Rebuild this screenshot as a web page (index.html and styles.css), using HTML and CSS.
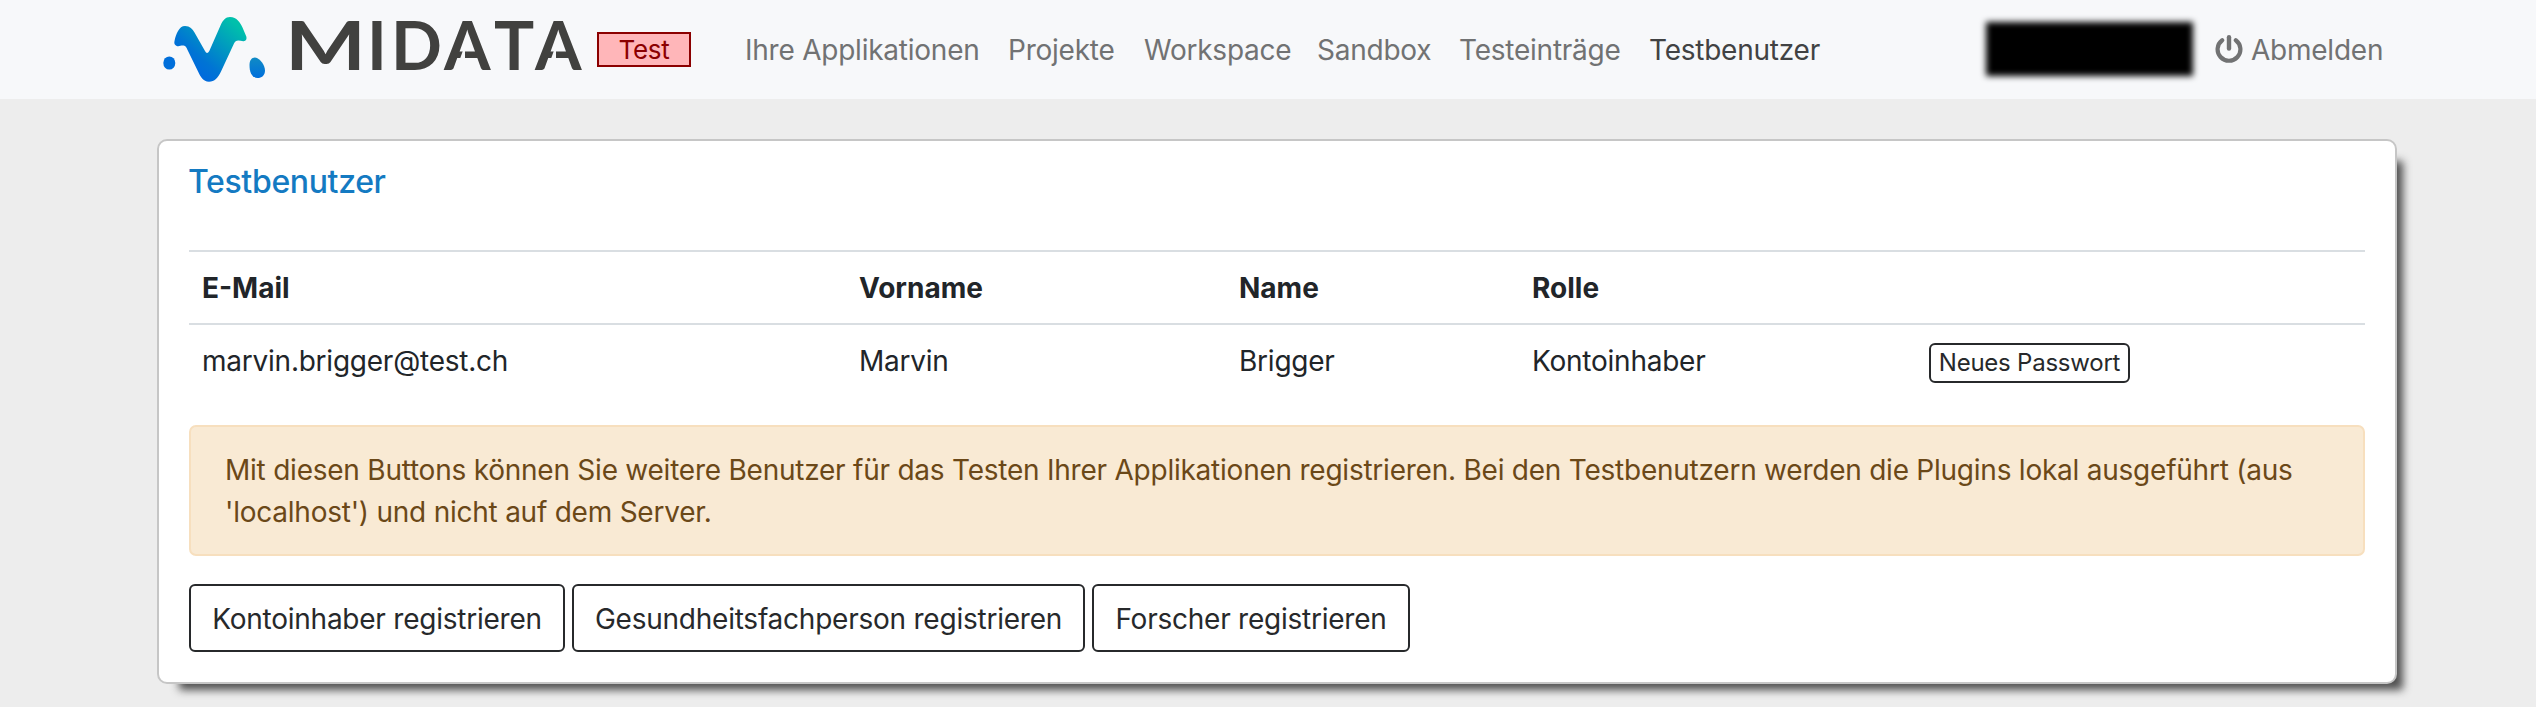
FILE: index.html
```html
<!DOCTYPE html>
<html lang="de">
<head>
<meta charset="utf-8">
<title>MIDATA – Testbenutzer</title>
<link rel="stylesheet" href="styles.css">
</head>
<body>
<header class="navbar">
  <a class="brand">
    <svg class="logo" viewBox="0 0 430 70" width="430" height="70" role="img" aria-label="MIDATA">
      <defs>
        <linearGradient id="wave" gradientUnits="userSpaceOnUse" x1="34" y1="54" x2="74" y2="8">
          <stop offset="0" stop-color="#006bdc"/><stop offset=".2" stop-color="#0074d4"/><stop offset="1" stop-color="#00c0ab"/>
        </linearGradient>
        <linearGradient id="drop" x1="0" y1="1" x2="0" y2="0">
          <stop offset="0" stop-color="#006fdc"/><stop offset="1" stop-color="#108bc4"/>
        </linearGradient>
      </defs>
      <path fill="url(#wave)" d="M13.7 29C11.4 28 11 26 11.5 24C13 17 16 9 22 9C27 9 29.5 12 31.5 15.5L42 34Q44 38 46.3 34L57.5 8.5C60 3 62.5 0 67 0C74 0 77 5.5 79.5 10.5L83.3 19.5C84 22 83 24.4 80.3 24.2Q77.5 23.4 75.3 23.4Q72.3 23.5 71 26.5L58 54.5C55 61 51.5 64.7 46 64.7C40 64.7 37.5 59.5 35.3 55L24.8 33.5C23.2 29.8 22.2 28.6 19.7 28.6C17.5 28.6 15.8 29.8 13.7 29Z"/>
      <ellipse cx="6.3" cy="46" rx="6" ry="6.6" fill="#006fda"/>
      <path fill="url(#drop)" d="M86.5 48C86.5 43 89 40.3 92 40.4C97.5 41.3 102 48.5 102 53.5C102 58.5 98.5 61 94.5 61C88.5 60.5 86.5 55 86.5 48Z"/>
      <g class="wordmark">
        <text transform="translate(122 53) scale(1.28 1)">M</text>
        <text y="53" x="204 228 281 331 372">IDATA</text>
      </g>
      <path class="notch" d="M295.5 46L302 46V32H300.5ZM386.5 46L393 46V32H391.5Z"/>
    </svg>
  </a>
  <span class="stage">Test</span>
  <nav class="nav">
    <a class="n1">Ihre Applikationen</a><a class="n2">Projekte</a><a class="n3">Workspace</a><a class="n4">Sandbox</a><a class="n5">Testeinträge</a><a class="n6 active">Testbenutzer</a>
  </nav>
  <div class="account">
    <span class="user"></span>
    <svg class="power" viewBox="0 0 28 28" width="28" height="28"><path d="M7.2 5.2A11.4 11.4 0 1 0 20.8 5.2" fill="none" stroke="#717273" stroke-width="4.2" stroke-linecap="round"/><path d="M14 2.2V13.6" stroke="#717273" stroke-width="4.4" stroke-linecap="round"/></svg>
    <a>Abmelden</a>
  </div>
</header>
<main class="card">
  <h1>Testbenutzer</h1>
  <table>
    <colgroup><col class="c1"><col class="c2"><col class="c3"><col class="c4"><col></colgroup>
    <thead><tr><th>E-Mail</th><th>Vorname</th><th>Name</th><th>Rolle</th><th></th></tr></thead>
    <tbody><tr><td>marvin.brigger@test.ch</td><td>Marvin</td><td>Brigger</td><td>Kontoinhaber</td><td><button class="small">Neues Passwort</button></td></tr></tbody>
  </table>
  <p class="alert">Mit diesen Buttons können Sie weitere Benutzer für das Testen Ihrer Applikationen registrieren. Bei den Testbenutzern werden die Plugins lokal ausgeführt (aus<br>'localhost') und nicht auf dem Server.</p>
  <div class="actions">
    <button class="b1">Kontoinhaber registrieren</button><button class="b2">Gesundheitsfachperson registrieren</button><button class="b3">Forscher registrieren</button>
  </div>
</main>
</body>
</html>
```
FILE: styles.css
```css
* { box-sizing: border-box; }
body { margin: 0; background: #ededed; color: #212529; font: 28px/42px Inter, "Liberation Sans", sans-serif; letter-spacing: -0.235px; height: 707px; overflow: hidden; }
.navbar { height: 99px; background: #f7f8fa; display: flex; align-items: flex-start; padding: 17px 0 0 163px; color: #717273; white-space: nowrap; }
.brand, .logo { display: block; }
.logo { flex: none; overflow: visible; }
.wordmark { font: 700 67px Lato, sans-serif; fill: #41413f; letter-spacing: 0; }
.notch { fill: #f7f8fa; }
.stage { width: 94px; height: 35px; margin: 15px 0 0 4px; border: 2px solid #8b0000; background: #ffb6b9; color: #8b0000; text-align: center; font-size: 26px; line-height: 32px; }
.nav { display: flex; margin: 12px 0 0 54px; }
.nav a { flex: none; }
.n1 { width: 263px; }
.n2 { width: 136px; }
.n3 { width: 173px; }
.n4 { width: 142px; }
.n5 { width: 190px; }
.nav .active { color: #414243; width: 337px; }
.account { display: flex; }
.user { width: 207px; height: 54px; margin-top: 5px; background: #000; filter: blur(3px); }
.power { margin: 18px 8px 0 22px; }
.account a { margin-top: 12px; }
.card { width: 2240px; height: 545px; margin: 40px 0 0 157px; padding: 20px 30px 0; background: #fff; border: 2px solid #c6c6c6; border-radius: 10px; box-shadow: 14px 14px 8px -8px #505050; }
h1 { margin: 0 0 0 -1px; font-size: 32px; line-height: 42px; font-weight: 500; color: #147ac2; height: 89px; letter-spacing: -0.35px; }
table { width: 2176px; table-layout: fixed; border-collapse: collapse; }
.c1 { width: 657px; }
.c2 { width: 380px; }
.c3 { width: 293px; }
.c4 { width: 398px; }
th, td { text-align: left; padding: 15px 13px 13px; height: 72px; border-top: 2px solid #d9dee2; vertical-align: top; line-height: 42px; }
th { font-weight: 700; letter-spacing: 0; padding-bottom: 14px; }
button { display: block; font: inherit; letter-spacing: inherit; color: #27292b; background: #fff; border: 2px solid #27292b; border-radius: 6px; padding: 0; white-space: nowrap; }
.small { width: 201px; height: 40px; margin: 3px 0 0 -1px; font-size: 24px; line-height: 36px; }
.alert { margin: 29px 0 28px; height: 131px; border: 2px solid #f7dfbe; background: #f9ead4; color: #6b4818; border-radius: 7px; padding: 22px 34px; white-space: nowrap; }
.actions { display: flex; gap: 7px; }
.actions button { height: 68px; padding-top: 1px; }
.b1 { width: 376px; }
.b2 { width: 513px; }
.b3 { width: 318px; }
```
